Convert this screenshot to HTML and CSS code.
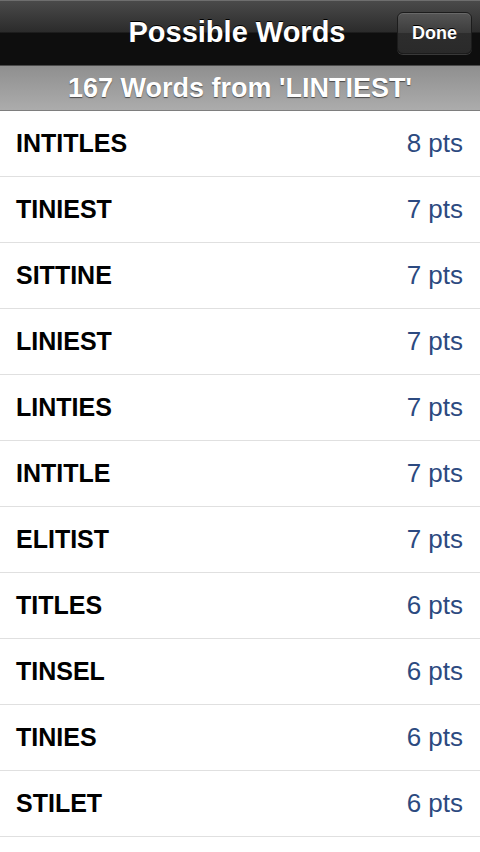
FILE: index.html
```html
<!DOCTYPE html>
<html>
<head>
<meta charset="utf-8">
<link rel="stylesheet" href="styles.css">
</head>
<body>
<div class="navbar">
  <div class="title">Possible Words</div>
  <div class="done">Done</div>
</div>
<div class="subheader">167 Words from 'LINTIEST'</div>
<ul class="list">
  <li class="row"><span class="word">INTITLES</span><span class="pts">8 pts</span></li>
  <li class="row"><span class="word">TINIEST</span><span class="pts">7 pts</span></li>
  <li class="row"><span class="word">SITTINE</span><span class="pts">7 pts</span></li>
  <li class="row"><span class="word">LINIEST</span><span class="pts">7 pts</span></li>
  <li class="row"><span class="word">LINTIES</span><span class="pts">7 pts</span></li>
  <li class="row"><span class="word">INTITLE</span><span class="pts">7 pts</span></li>
  <li class="row"><span class="word">ELITIST</span><span class="pts">7 pts</span></li>
  <li class="row"><span class="word">TITLES</span><span class="pts">6 pts</span></li>
  <li class="row"><span class="word">TINSEL</span><span class="pts">6 pts</span></li>
  <li class="row"><span class="word">TINIES</span><span class="pts">6 pts</span></li>
  <li class="row"><span class="word">STILET</span><span class="pts">6 pts</span></li>
</ul>
</body>
</html>
```

FILE: styles.css
```css
html, body {
  margin: 0;
  padding: 0;
  background: #ffffff;
  font-family: "Liberation Sans", Arial, sans-serif;
  width: 480px;
  height: 852px;
  overflow: hidden;
}
.navbar {
  position: relative;
  height: 64px;
  border-top: 1px solid #6e6e6e;
  border-bottom: 1px solid #4a4a4a;
  background: linear-gradient(to bottom, #4a4a4a 0px, #2b2b2b 31px, #0e0e0e 32px, #0e0e0e 64px);
  display: flex;
  align-items: center;
  justify-content: center;
}
.title {
  color: #ffffff;
  font-weight: bold;
  font-size: 29px;
  text-shadow: 0 -1px 0 #000000;
  margin-left: -6px;
  margin-top: -1px;
}
.done {
  position: absolute;
  right: 8px;
  top: 11px;
  width: 75px;
  height: 42px;
  box-sizing: border-box;
  border: 1px solid #1c1c1c;
  border-radius: 6px;
  background: linear-gradient(to bottom, #555555 0%, #3c3c3c 50%, #2d2d2d 51%, #2a2a2a 100%);
  box-shadow: 0 1px 0 rgba(255,255,255,0.18), inset 0 1px 0 rgba(255,255,255,0.12);
  color: #ffffff;
  font-weight: bold;
  font-size: 18px;
  display: flex;
  align-items: center;
  justify-content: center;
  text-shadow: 0 -1px 0 #000000;
}
.subheader {
  height: 44px;
  border-bottom: 1px solid #7e7e7e;
  background: linear-gradient(to bottom, #8f8f8f 0%, #acacac 100%);
  color: #ffffff;
  font-weight: bold;
  font-size: 27px;
  text-align: center;
  line-height: 44px;
  text-shadow: 0 1px 1px #4a4a4a;
}
.list {
  list-style: none;
  margin: 0;
  padding: 0;
}
.row {
  height: 65px;
  border-bottom: 1px solid #e0e0e0;
  display: flex;
  align-items: center;
  justify-content: space-between;
  padding: 0 17px 0 16px;
}
.word {
  font-weight: bold;
  font-size: 25px;
  color: #000000;
}
.pts {
  font-size: 26px;
  color: #2c4a80;
}
```
